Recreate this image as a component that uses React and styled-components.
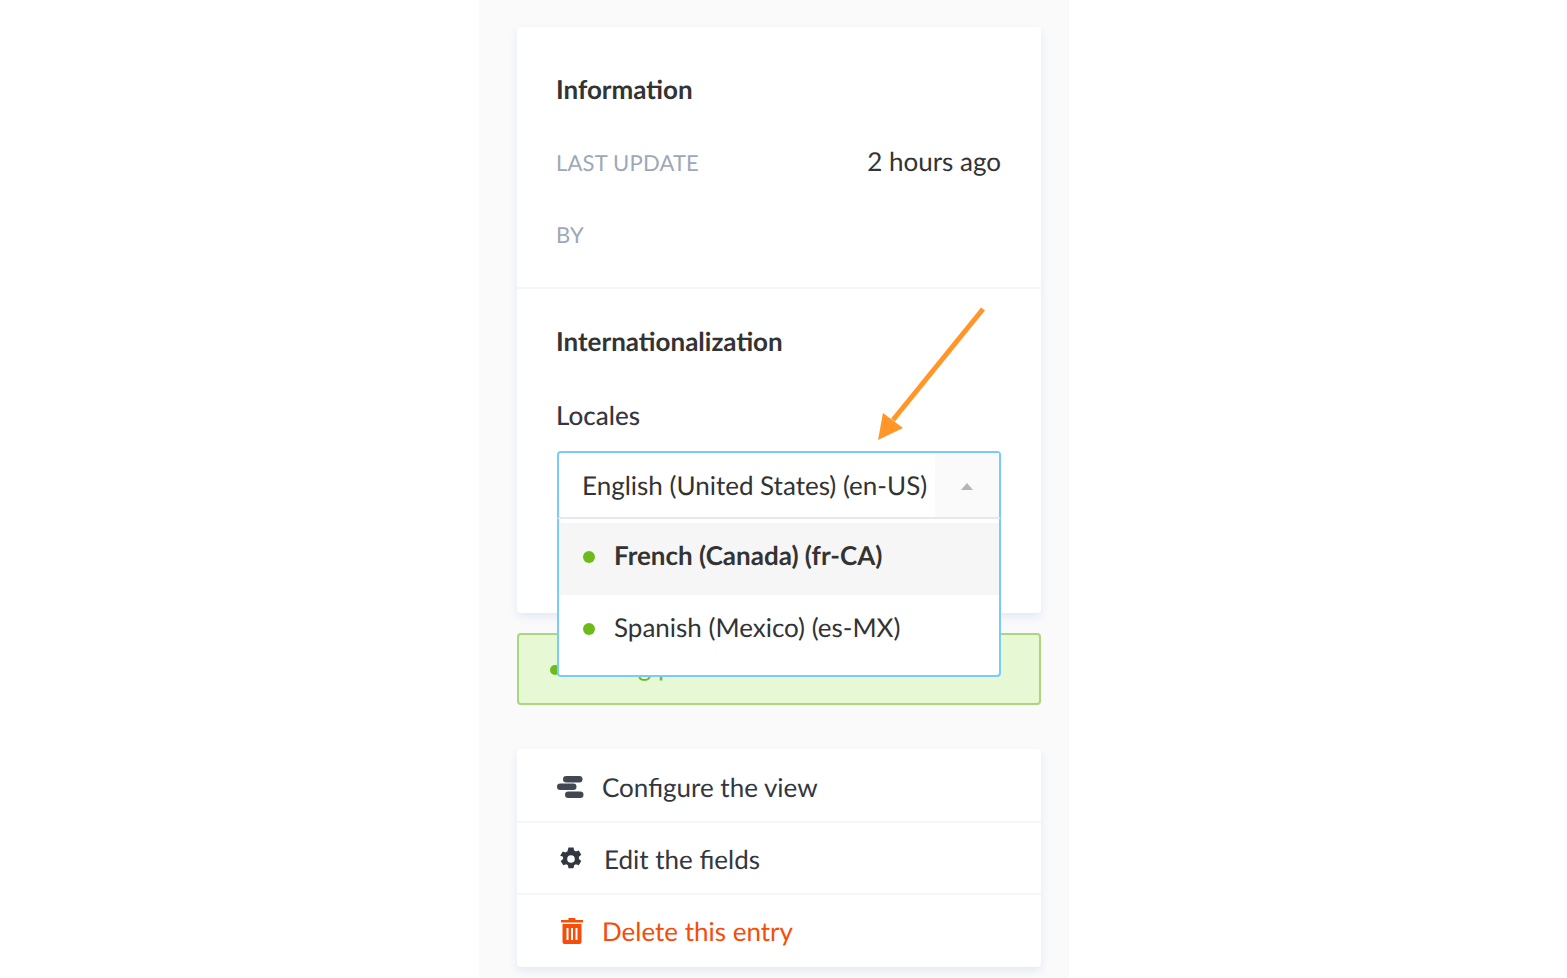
import React from "react";
import styled, { createGlobalStyle } from "styled-components";

const Global = createGlobalStyle`
  html, body { margin: 0; padding: 0; background: #fff; height: 978px; overflow: hidden; }
  body { font-family: Lato, "Liberation Sans", sans-serif; font-size: 26px; color: #333740; text-rendering: geometricPrecision; }
  * { box-sizing: border-box; }
`;

const Page = styled.div`
  width: 590px;
  height: 978px;
  margin-left: 479px;
  padding: 27px 28px 0 38px;
  background: #fafafb;
  display: flex;
  flex-direction: column;
  overflow: hidden;
  position: relative;
`;

const Card = styled.section`
  width: 524px;
  background: #fff;
  border-radius: 4px;
  box-shadow: 0 4px 8px #e3e9f3;
  flex: none;
`;

const InfoSection = styled.div`
  height: 262px;
  padding: 46px 40px 0 39px;
  border-bottom: 2px solid #f6f6f6;
`;

const Heading = styled.h2`
  margin: 0;
  font-size: 26px;
  line-height: 32px;
  font-weight: 700;
  color: #333;
`;

const MetaRow = styled.div`
  display: flex;
  justify-content: space-between;
  align-items: center;
  height: 32px;
  margin-top: ${p => p.$top}px;
`;

const MetaLabel = styled.span`
  font-size: 22px;
  letter-spacing: 0.2px;
  color: #9ea7b8;
  text-transform: uppercase;
`;

const MetaValue = styled.span`
  font-size: 26px;
  margin-bottom: 2px;
  color: #333;
`;

const I18nSection = styled.div`
  position: relative;
  height: 324px;
  padding: 36px 40px 0 39px;
`;

const FieldLabel = styled.div`
  margin-top: 42px;
  font-size: 26px;
  line-height: 32px;
  font-weight: 500;
  color: #333740;
`;

const SelectBox = styled.div`
  position: absolute;
  left: 40px;
  top: 162px;
  width: 444px;
  height: 68px;
  display: flex;
  align-items: stretch;
  background: #fff;
  border: 2px solid #78caff;
  border-bottom-color: #e3e9f3;
  border-radius: 4px 4px 0 0;
  z-index: 3;
`;

const SelectValue = styled.div`
  flex: 1;
  padding-left: 23px;
  line-height: 64px;
  font-size: 26px;
  color: #333;
  white-space: nowrap;
`;

const Caret = styled.div`
  width: 64px;
  background: #fafafb;
  display: flex;
  align-items: center;
  justify-content: center;
`;

const CaretShape = styled.span`
  width: 0;
  height: 0;
  margin-top: 2px;
  border-left: 6px solid transparent;
  border-right: 6px solid transparent;
  border-bottom: 7px solid #b3b5b9;
`;

const Menu = styled.div`
  position: absolute;
  left: 40px;
  top: 230px;
  width: 444px;
  height: 158px;
  padding-top: 4px;
  background: #fff;
  border: 2px solid #78caff;
  border-top: 0;
  border-radius: 0 0 4px 4px;
  z-index: 3;
`;

const Option = styled.div`
  display: flex;
  align-items: center;
  height: 72px;
  padding: 0 0 8px 23px;
  font-size: 26px;
  font-weight: ${p => (p.$active ? 700 : 400)};
  background: ${p => (p.$active ? "#f6f6f6" : "transparent")};
  color: #333;
`;

const Dot = styled.span`
  width: 12px;
  height: 12px;
  border-radius: 50%;
  background: #6dbb1a;
  margin: 4px 19px 0 1px;
  flex: none;
`;

const Banner = styled.div`
  width: 524px;
  height: 72px;
  margin-top: 20px;
  padding-left: 31px;
  display: flex;
  align-items: center;
  background: #e6f8d4;
  border: 2px solid #aad67c;
  border-radius: 4px;
  color: #6dbb1a;
  font-size: 26px;
  flex: none;
`;

const BannerDot = styled(Dot)`
  width: 10px;
  height: 10px;
  margin: 2px 12px 0 0;
`;

const BannerText = styled.span`
  margin-bottom: 7px;
`;

const ActionCard = styled(Card)`
  margin-top: 44px;
  padding-bottom: 2px;
`;

const Action = styled.div`
  display: flex;
  align-items: center;
  height: 72px;
  padding: 4px 0 0 39px;
  font-size: 26px;
  color: ${p => (p.$danger ? "#f64d0a" : "#333740")};
  & + & { border-top: 2px solid #f6f6f6; padding-top: 2px; }
`;

const IconSlot = styled.span`
  width: ${p => p.$w}px;
  margin-left: 1px;
  margin-right: -1px;
  flex: none;
  display: flex;
  align-items: center;
`;

const Arrow = styled.svg`
  position: absolute;
  left: 860px;
  top: 300px;
  z-index: 5;
`;

export default function App() {
  return (
    <>
      <Global />
      <Page>
        <Card>
          <InfoSection>
            <Heading>Information</Heading>
            <MetaRow $top={41}>
              <MetaLabel>Last update</MetaLabel>
              <MetaValue>2 hours ago</MetaValue>
            </MetaRow>
            <MetaRow $top={40}>
              <MetaLabel>By</MetaLabel>
            </MetaRow>
          </InfoSection>
          <I18nSection>
            <Heading>Internationalization</Heading>
            <FieldLabel>Locales</FieldLabel>
            <SelectBox>
              <SelectValue>English (United States) (en-US)</SelectValue>
              <Caret><CaretShape /></Caret>
            </SelectBox>
            <Menu>
              <Option $active><Dot />French (Canada) (fr-CA)</Option>
              <Option><Dot />Spanish (Mexico) (es-MX)</Option>
            </Menu>
          </I18nSection>
        </Card>
        <Banner><BannerDot /><BannerText>Editing published version</BannerText></Banner>
        <ActionCard>
          <Action>
            <IconSlot $w={46}>
              <svg width="27" height="22" viewBox="0 0 27 22" fill="#414753">
                <rect x="6" y="0" width="19.500" height="6.500" rx="3.250" />
                <rect x="0" y="7.500" width="19.500" height="6.500" rx="3.250" />
                <rect x="8" y="15.500" width="18.500" height="6.500" rx="3.250" />
              </svg>
            </IconSlot>
            Configure the view
          </Action>
          <Action>
            <IconSlot $w={48}>
              <svg width="28" height="24" viewBox="0 0 28 24">
                <path fill="#333740" fillRule="evenodd" d="M11.5.500h5l.6 3c.6.200 1.200.500 1.700.900l2.900-1 2.600 4.300-2.400 2.100c.1.700.1 1.400 0 2.100l2.400 2.100-2.600 4.300-2.900-1c-.5.400-1.100.700-1.700.9l-.6 3h-5l-.6-3c-.6-.2-1.200-.5-1.700-.9l-2.900 1-2.600-4.300 2.400-2.100c-.1-.7-.1-1.400 0-2.100L3.200 8.700l2.600-4.300 2.900 1c.5-.4 1.100-.7 1.700-.9zM14 8.200a3.800 3.800 0 1 0 0 7.600 3.800 3.800 0 0 0 0-7.600z" />
              </svg>
            </IconSlot>
            Edit the fields
          </Action>
          <Action $danger>
            <IconSlot $w={46}>
              <svg width="28" height="28" viewBox="0 0 28 28">
                <path fill="#f64d0a" d="M11.500 1h6a1 1 0 0 1 1 1v1H26v2.500H4V3h7.500V2a1 1 0 0 1 0-1z" />
                <path fill="#f64d0a" fillRule="evenodd" d="M5.500 7h19v18a2 2 0 0 1-2 2h-15a2 2 0 0 1-2-2zM9.500 11v12h2v-12zM14 11v12h2v-12zM18.500 11v12h2v-12z" />
              </svg>
            </IconSlot>
            Delete this entry
          </Action>
        </ActionCard>
      </Page>
      <Arrow width="130" height="150" viewBox="0 0 130 150">
        <line x1="123" y1="9" x2="33" y2="120" stroke="#ff9627" strokeWidth="5" />
        <polygon points="18,140 23,113 43,128" fill="#ff9627" />
      </Arrow>
    </>
  );
}
